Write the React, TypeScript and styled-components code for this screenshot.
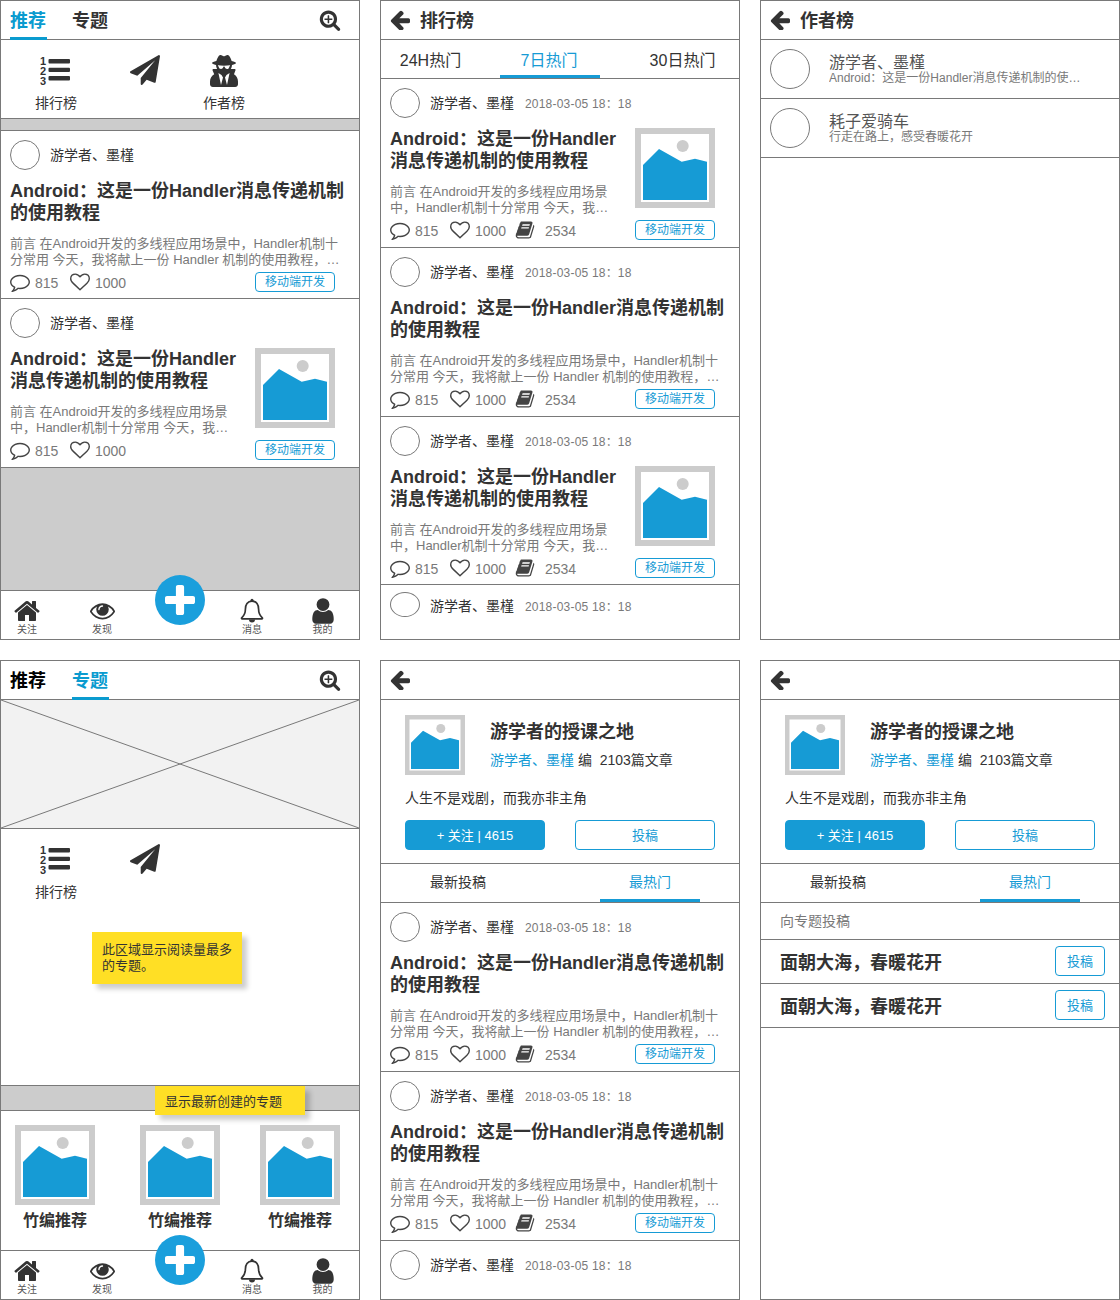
import styled, { createGlobalStyle } from "styled-components";
import { FaUserSecret } from "react-icons/fa";

const BLUE = "#169bd5";
const LINE = "#797979";
const INK = "#333333";

// Font Awesome 4 shapes, the ones the wireframe was drawn with
const ICONS = {
  arrowLeft:
    "M1664 896v128q0 53-32.5 90.5t-84.5 37.5h-704l293 294q38 36 38 90t-38 90l-75 76q-38 38-90 38-53 0-91-38l-651-652q-37-37-37-90 0-52 37-91l651-650q38-38 91-38 52 0 90 38l75 74q38 38 38 91t-38 91l-293 293h704q52 0 84.5 37.5t32.5 90.5z",
  plane:
    "M1764 11q33 24 27 64l-256 1536q-5 29-32 45-14 8-31 8-11 0-24-5l-453-185-242 295q-18 23-49 23-13 0-22-4-19-7-30.5-23.5t-11.5-36.5v-349l864-1059-1069 925-395-162q-37-14-40-55-2-40 32-59l1664-960q15-9 32-9 20 0 36 11z",
  home:
    "M1472 992v480q0 26-19 45t-45 19h-384v-384h-256v384h-384q-26 0-45-19t-19-45v-480q0-1 .5-3t.5-3l575-474 575 474q1 2 1 6zm223-69l-62 74q-8 9-21 11h-3q-13 0-21-7l-692-577-692 577q-12 8-24 7-13-2-21-11l-62-74q-8-10-7-23.5t11-21.5l719-599q32-26 76-26t76 26l244 204v-195q0-14 9-23t23-9h192q14 0 23 9t9 23v408l219 182q10 8 11 21.5t-7 23.5z",
  eye:
    "M1664 960q-152-236-381-353 61 104 61 225 0 185-131.5 316.5t-316.5 131.5-316.5-131.5-131.5-316.5q0-121 61-225-229 117-381 353 133 205 333.5 326.5t434.5 121.5 434.5-121.5 333.5-326.5zm-720-384q0-20-14-34t-34-14q-125 0-214.5 89.5t-89.5 214.5q0 20 14 34t34 14 34-14 14-34q0-86 61-147t147-61q20 0 34-14t14-34zm848 384q0 34-20 69-140 230-376.5 368.5t-499.5 138.5-499.5-139-376.5-368q-20-35-20-69t20-69q140-229 376.5-368t499.5-139 499.5 139 376.5 368q20 35 20 69z",
  user:
    "M1536 1399q0 109-62.5 187t-150.5 78h-854q-88 0-150.5-78t-62.5-187q0-85 8.5-160.5t31.5-152 58.5-131 94-89 134.5-34.5q131 128 313 128t313-128q76 0 134.5 34.5t94 89 58.5 131 31.5 152 8.5 160.5zm-256-887q0 159-112.5 271.5t-271.5 112.5-271.5-112.5-112.5-271.5 112.5-271.5 271.5-112.5 271.5 112.5 112.5 271.5z",
  book:
    "M1703 478q40 57 18 129l-275 906q-19 64-76.5 107.5t-122.5 43.5h-923q-77 0-148.5-53.5t-99.5-131.5q-24-67-2-127 0-4 3-27t4-37q1-8-3-21.5t-3-19.5q2-11 8-21t16.5-23.5 16.5-23.5q23-38 45-91.5t30-91.5q3-10 .5-30t-.5-28q3-11 17-28t17-23q21-36 42-92t25-90q1-9-2.5-32t.5-28q4-13 22-30.5t22-22.5q19-26 42.5-84.5t27.5-96.5q1-8-3-25.5t-2-26.5q2-8 9-18t18-23 17-21q8-12 16.5-30.5t15-35 16-36 19.5-32 26.5-23.5 36-11.5 47.5 5.5l-1 3q38-9 51-9h761q74 0 114 56t18 130l-274 906q-36 119-71.5 153.5t-128.5 34.5h-869q-27 0-38 15-11 16-1 43 24 70 144 70h923q29 0 56-15.5t35-41.5l300-987q7-22 5-57 38 15 59 43zm-1064 2q-4 13 2 22.5t20 9.5h608q13 0 25.5-9.5t16.5-22.5l21-64q4-13-2-22.5t-20-9.5h-608q-13 0-25.5 9.5t-16.5 22.5zm-83 256q-4 13 2 22.5t20 9.5h608q13 0 25.5-9.5t16.5-22.5l21-64q4-13-2-22.5t-20-9.5h-608q-13 0-25.5 9.5t-16.5 22.5z",
  search:
    "M1088 800v64q0 13-9.5 22.5t-22.5 9.5h-224v224q0 13-9.5 22.5t-22.5 9.5h-64q-13 0-22.5-9.5t-9.5-22.5v-224h-224q-13 0-22.5-9.5t-9.5-22.5v-64q0-13 9.5-22.5t22.5-9.5h224v-224q0-13 9.5-22.5t22.5-9.5h64q13 0 22.5 9.5t9.5 22.5v224h224q13 0 22.5 9.5t9.5 22.5zm128 32q0-185-131.5-316.5t-316.5-131.5-316.5 131.5-131.5 316.5 131.5 316.5 316.5 131.5 316.5-131.5 131.5-316.5zm512 832q0 53-37.5 90.5t-90.5 37.5q-54 0-90-38l-343-342q-179 124-399 124-143 0-273.5-55.5t-225-150-150-225-55.5-273.5 55.5-273.5 150-225 225-150 273.5-55.5 273.5 55.5 225 150 150 225 55.5 273.5q0 220-124 399l343 343q37 37 37 90z",
  comment:
    "M896 384q-204 0-381.5 69.5t-282 187.5-104.5 255q0 112 71.5 213.5t201.5 175.5l87 50-27 96q-24 91-70 172 152-63 275-171l43-38 57 6q69 8 130 8 204 0 381.5-69.5t282-187.5 104.5-255-104.5-255-282-187.5-381.5-69.5zm896 512q0 174-120 321.5t-326 233-450 85.5q-70 0-145-8-198 175-460 242-49 14-114 22h-5q-15 0-27-10.5t-16-27.5v-1q-3-4-.5-12t2-10 4.5-9.5l6-9 7-8.5 8-9q7-8 31-34.5t34.5-38 31-39.5 32.5-51 27-59 26-76q-157-89-247.5-220t-90.5-281q0-174 120-321.5t326-233 450-85.5 450 85.5 326 233 120 321.5z",
  heart:
    "M1664 596q0-81-21.5-143t-55-98.5-81.5-59.5-94-31-98-8-112 25.5-110.5 64-86.5 72-60 61.5q-18 22-49 22t-49-22q-24-28-60-61.5t-86.5-72-110.5-64-112-25.5-98 8-94 31-81.5 59.5-55 98.5-21.5 143q0 168 187 355l581 560 580-559q188-188 188-356zm128 0q0 221-229 450l-623 600q-18 18-44 18t-44-18l-624-601q-10-8-27.5-26t-55.5-65.5-68-97.5-53.5-121-23.5-138q0-220 127-344t351-124q62 0 126.5 21.5t120 58 95.5 68.5 76 68q36-36 76-68t95.5-68.5 120-58 126.5-21.5q224 0 351 124t127 344z",
  plus:
    "M1600 736v192q0 40-28 68t-68 28h-416v416q0 40-28 68t-68 28h-192q-40 0-68-28t-28-68v-416h-416q-40 0-68-28t-28-68v-192q0-40 28-68t68-28h416v-416q0-40 28-68t68-28h192q40 0 68 28t28 68v416h416q40 0 68 28t28 68z",
};

const Icon = ({ name, size, viewBox }: { name: keyof typeof ICONS; size: number; viewBox?: string }) => (
  <svg width={size} height={size} viewBox={viewBox ?? "0 0 1792 1792"} fill="currentColor">
    <path d={ICONS[name]} />
  </svg>
);

const RankIcon = () => (
  <svg width="30" height="30" viewBox="0 0 30 30" fill="currentColor">
    <text x="3" y="9.5" textAnchor="middle" fontSize="11" fontWeight="700">1</text>
    <text x="3" y="19.5" textAnchor="middle" fontSize="11" fontWeight="700">2</text>
    <text x="3" y="29.5" textAnchor="middle" fontSize="11" fontWeight="700">3</text>
    <rect x="8.5" y="4" width="21.5" height="4.4" rx="1" />
    <rect x="8.5" y="12.7" width="21.5" height="4.4" rx="1" />
    <rect x="8.5" y="21" width="21.5" height="4.4" rx="1" />
  </svg>
);

const BellIcon = () => (
  <svg width="24" height="26" viewBox="0 0 24 26">
    <path
      d="M12 3.2c-4.6 0-6.6 3.4-6.6 8 0 4.6-1.6 6.6-3.7 8.6-.4.5-.1 1.1.4 1.1h19.8c.5 0 .8-.6.4-1.1-2.1-2-3.7-4-3.7-8.6 0-4.6-2-8-6.6-8z"
      fill="none"
      stroke="currentColor"
      strokeWidth="1.7"
    />
    <circle cx="12" cy="2.2" r="1.5" fill="currentColor" />
    <path d="M9 21.6h6a3 3 0 0 1-6 0z" fill="currentColor" />
  </svg>
);

const GlobalStyle = createGlobalStyle`
  html, body {
    margin: 0;
    padding: 0;
    background: #fff;
  }
  body {
    font-family: "Liberation Sans", "Noto Sans CJK SC", sans-serif;
    color: ${INK};
  }
`;

const Board = styled.div`
  display: grid;
  grid-template-columns: repeat(3, 360px);
  grid-auto-rows: 640px;
  gap: 20px;
  width: 1120px;
`;

const Screen = styled.div`
  position: relative;
  box-sizing: border-box;
  display: flex;
  flex-direction: column;
  border: 1px solid ${LINE};
  overflow: hidden;
`;

const Header = styled.div`
  flex: none;
  box-sizing: border-box;
  height: 39px;
  display: flex;
  align-items: center;
  gap: 10px;
  padding: 0 9px;
  border-bottom: 1px solid ${LINE};
  color: ${INK};
`;

const HeaderTitle = styled.div`
  font-size: 18px;
  font-weight: 700;
  padding-bottom: 2px;
`;

const MainTab = styled.div<{ $active?: boolean; $strong?: boolean }>`
  box-sizing: border-box;
  height: 38px;
  width: 37px;
  margin-right: 15px;
  padding-top: 7px;
  line-height: 24px;
  font-size: 18px;
  font-weight: 700;
  white-space: nowrap;
  color: ${(p) => (p.$active ? "#0a9bcf" : p.$strong ? "#000" : INK)};
  border-bottom: 3px solid ${(p) => (p.$active ? "#0a9bcf" : "transparent")};
  margin-top: 1px;
`;

const SearchButton = styled.div`
  margin-left: auto;
  margin-right: 9px;
  line-height: 0;
  color: ${INK};
`;

const Shortcuts = styled.div`
  flex: none;
  display: grid;
  grid-template-columns: 110px 68px 90px;
  height: 78px;
  box-sizing: border-box;
`;

const Shortcut = styled.div`
  display: flex;
  flex-direction: column;
  align-items: center;
  gap: 9px;
  padding-top: 15px;
  font-size: 14px;
  line-height: 18px;
`;

const ShortcutIcon = styled.div<{ $nudge?: number }>`
  height: 30px;
  font-size: 32px;
  line-height: 0;
  margin-left: ${(p) => p.$nudge ?? 0}px;
  color: ${INK};
`;

const Band = styled.div<{ $height?: number }>`
  flex: none;
  height: ${(p) => p.$height ?? 11}px;
  background: #cccccc;
  border-top: 1px solid ${LINE};
  border-bottom: 1px solid ${LINE};
`;

const Filler = styled.div`
  flex: 1;
  background: #cccccc;
`;

const Spacer = styled.div`
  flex: 1;
`;

const ArticleBox = styled.div<{ $tight?: boolean; $last?: boolean; $top?: number }>`
  flex: none;
  box-sizing: border-box;
  padding: ${(p) => p.$top ?? 9}px 0 ${(p) => (p.$tight ? 6 : 7)}px 9px;
  border-bottom: ${(p) => (p.$last ? "none" : `1px solid ${LINE}`)};
`;

const AuthorRow = styled.div<{ $squat?: boolean }>`
  display: flex;
  align-items: center;
  height: ${(p) => (p.$squat ? 28 : 30)}px;
  font-size: 14px;
`;

const Avatar = styled.div<{ $size?: number; $squat?: boolean }>`
  flex: none;
  box-sizing: border-box;
  width: ${(p) => p.$size ?? 30}px;
  height: ${(p) => (p.$squat ? 25 : p.$size ?? 30)}px;
  align-self: ${(p) => (p.$squat ? "flex-start" : "auto")};
  border: 1px solid ${LINE};
  border-radius: 50%;
  background: #fff;
`;

const AuthorName = styled.div`
  margin-left: 10px;
  padding-bottom: 2px;
`;

const DateText = styled.div`
  margin-left: 11px;
  padding-bottom: 2px;
  font-size: 12px;
  color: #797979;
  letter-spacing: 0.2px;
`;

const ArticleBody = styled.div<{ $thumb?: boolean }>`
  display: grid;
  grid-template-columns: ${(p) => (p.$thumb ? "232px 80px" : "340px")};
  column-gap: 13px;
  margin-top: 10px;
  height: 87px;
`;

const ArticleTitle = styled.div`
  font-size: 18px;
  line-height: 22px;
  font-weight: 700;
  color: ${INK};
`;

const ArticleDesc = styled.div<{ $thumb?: boolean }>`
  margin-top: 12px;
  font-size: 13px;
  line-height: 16px;
  color: #797979;
  max-width: ${(p) => (p.$thumb ? 225 : 330)}px;
  display: -webkit-box;
  -webkit-line-clamp: 2;
  -webkit-box-orient: vertical;
  overflow: hidden;
`;

const ThumbCell = styled.div`
  line-height: 0;
`;

const StatsRow = styled.div`
  display: flex;
  align-items: center;
  height: 20px;
  margin-top: 5px;
  padding-right: 24px;
  font-size: 14px;
  color: #797979;
`;

const Stat = styled.div<{ $width: number }>`
  display: flex;
  align-items: center;
  gap: 5px;
  width: ${(p) => p.$width}px;
  margin-top: 2px;
`;

const StatIcon = styled.span`
  display: inline-flex;
  margin-top: -2px;
  color: #444444;
`;

const StatNumber = styled.span<{ $gap?: number }>`
  margin-left: ${(p) => p.$gap ?? 0}px;
`;

const Tag = styled.div`
  box-sizing: border-box;
  margin-left: auto;
  width: 80px;
  height: 20px;
  border: 1px solid ${BLUE};
  border-radius: 4px;
  text-align: center;
  line-height: 18px;
  font-size: 12px;
  color: ${BLUE};
`;

const SubTabs = styled.div`
  flex: none;
  box-sizing: border-box;
  height: 39px;
  display: grid;
  grid-template-columns: 119px 100px 1fr;
  border-bottom: 1px solid ${LINE};
`;

const SubTab = styled.div<{ $active?: boolean; $left?: number; $right?: number }>`
  box-sizing: border-box;
  height: 38px;
  text-align: center;
  line-height: 42px;
  font-size: 16px;
  color: ${(p) => (p.$active ? BLUE : INK)};
  border-bottom: 3px solid ${(p) => (p.$active ? BLUE : "transparent")};
  padding-left: ${(p) => p.$left ?? 0}px;
  padding-right: ${(p) => p.$right ?? 0}px;
`;

const TopicTabs = styled(SubTabs)`
  grid-template-columns: 219px 100px;
`;

const TopicTab = styled(SubTab)`
  font-size: 14px;
  line-height: 36px;
`;

const AuthorItem = styled.div`
  flex: none;
  box-sizing: border-box;
  height: 59px;
  display: flex;
  align-items: center;
  gap: 19px;
  padding: 0 9px;
  border-bottom: 1px solid ${LINE};
`;

const AuthorText = styled.div`
  min-width: 0;
`;

const AuthorItemName = styled.div`
  font-size: 16px;
  line-height: 20px;
  color: #555;
`;

const AuthorItemSub = styled.div`
  margin-top: -2px;
  font-size: 12px;
  line-height: 14px;
  color: #797979;
  width: 252px;
  white-space: nowrap;
  overflow: hidden;
  text-overflow: ellipsis;
`;

const TabBar = styled.div`
  flex: none;
  box-sizing: border-box;
  height: 49px;
  display: grid;
  grid-template-columns: 52px 98px 67px 68px 1fr;
  border-top: 1px solid ${LINE};
  background: #fff;
`;

const TabItem = styled.div`
  display: flex;
  flex-direction: column;
  align-items: center;
  padding-top: 6px;
  font-size: 10px;
  line-height: 12px;
  color: #555;
`;

const TabIcon = styled.div`
  height: 27px;
  display: flex;
  align-items: center;
  justify-content: center;
  color: ${INK};
`;

const Fab = styled.div<{ $bottom: number }>`
  position: absolute;
  left: 154px;
  bottom: ${(p) => p.$bottom}px;
  width: 50px;
  height: 50px;
  border-radius: 50%;
  background: #1a9fdc;
  display: flex;
  align-items: center;
  justify-content: center;
  color: #fff;
`;

const Note = styled.div<{ $left: number; $top: number; $width: number; $height: number; $pad: number }>`
  position: absolute;
  left: ${(p) => p.$left}px;
  top: ${(p) => p.$top}px;
  width: ${(p) => p.$width}px;
  height: ${(p) => p.$height}px;
  box-sizing: border-box;
  padding: ${(p) => p.$pad}px 10px 0;
  background: #ffdf25;
  box-shadow: 5px 5px 5px rgba(0, 0, 0, 0.2);
  font-size: 13px;
  line-height: 16px;
  color: ${INK};
`;

const Banner = styled.div`
  flex: none;
  height: 128px;
  line-height: 0;
  background: #f2f2f2;
  border-bottom: 1px solid ${LINE};
`;

const TopicGrid = styled.div`
  flex: none;
  height: 139px;
  box-sizing: border-box;
  display: grid;
  grid-template-columns: 125px 120px 1fr;
  padding: 14px 0 0 14px;
`;

const TopicCard = styled.div`
  width: 80px;
  line-height: 0;
`;

const TopicName = styled.div`
  margin-top: 6px;
  font-size: 16px;
  line-height: 20px;
  font-weight: 700;
  text-align: center;
  color: ${INK};
`;

const Profile = styled.div`
  flex: none;
  box-sizing: border-box;
  height: 164px;
  padding: 15px 24px 0;
  border-bottom: 1px solid ${LINE};
`;

const ProfileHead = styled.div`
  display: flex;
  gap: 25px;
  line-height: 0;
`;

const ProfileName = styled.div`
  font-size: 18px;
  line-height: 24px;
  font-weight: 700;
  color: ${INK};
  margin-top: 5px;
`;

const ProfileMeta = styled.div`
  margin-top: 8px;
  font-size: 14px;
  line-height: 16px;
  color: ${INK};
`;

const BlueText = styled.span`
  color: ${BLUE};
`;

const Motto = styled.div`
  margin-top: 15px;
  font-size: 14px;
  line-height: 16px;
  color: ${INK};
`;

const ProfileButtons = styled.div`
  display: flex;
  gap: 30px;
  margin-top: 14px;
`;

const ActionButton = styled.div<{ $filled?: boolean; $width?: number }>`
  box-sizing: border-box;
  width: ${(p) => p.$width ?? 140}px;
  height: 30px;
  border: 1px solid ${BLUE};
  border-radius: 4px;
  text-align: center;
  line-height: 30px;
  font-size: 13px;
  font-weight: 400;
  background: ${(p) => (p.$filled ? BLUE : "#fff")};
  color: ${(p) => (p.$filled ? "#fff" : BLUE)};
`;

const SubmitCaption = styled.div`
  flex: none;
  box-sizing: border-box;
  height: 37px;
  padding-left: 19px;
  line-height: 36px;
  font-size: 14px;
  color: #797979;
  border-bottom: 1px solid ${LINE};
`;

const SubmitRow = styled.div`
  flex: none;
  box-sizing: border-box;
  height: 44px;
  display: flex;
  align-items: center;
  justify-content: space-between;
  padding: 0 14px 2px 19px;
  font-size: 18px;
  font-weight: 700;
  color: ${INK};
  border-bottom: 1px solid ${LINE};
`;

const Thumb = ({ size = 80 }: { size?: number }) => (
  <svg width={size} height={size} viewBox="0 0 80 80">
    <rect width="80" height="80" fill="#cccccc" />
    <rect x="6" y="6" width="68" height="68" fill="#fff" />
    <circle cx="47.7" cy="18" r="6" fill="#cccccc" />
    <path d="M8 37 L24 21 L46.7 33.7 L60 30.7 L72 33.7 L72 72 L8 72 Z" fill="#169bd5" />
  </svg>
);

const BannerCross = () => (
  <svg width="358" height="128" viewBox="0 0 358 128">
    <path d="M0 0 L358 128 M358 0 L0 128" stroke="#797979" strokeWidth="1" fill="none" />
  </svg>
);

const DESC_LONG =
  "前言 在Android开发的多线程应用场景中，Handler机制十分常用 今天，我将献上一份 Handler 机制的使用教程，希望对大家有所帮助，欢迎阅读";

type ArticleProps = {
  thumb?: boolean;
  meta?: boolean;
  tight?: boolean;
};

const Author = ({ meta, squat }: { meta?: boolean; squat?: boolean }) => (
  <AuthorRow $squat={squat}>
    <Avatar $squat={squat} />
    <AuthorName>游学者、墨槿</AuthorName>
    {meta && <DateText>2018-03-05 18：18</DateText>}
  </AuthorRow>
);

const Article = ({ thumb, meta, tight }: ArticleProps) => (
  <ArticleBox $tight={tight}>
    <Author meta={meta} />
    <ArticleBody $thumb={thumb}>
      <div>
        <ArticleTitle>Android：这是一份Handler消息传递机制的使用教程</ArticleTitle>
        <ArticleDesc $thumb={thumb}>{DESC_LONG}</ArticleDesc>
      </div>
      {thumb && (
        <ThumbCell>
          <Thumb />
        </ThumbCell>
      )}
    </ArticleBody>
    <StatsRow>
      <Stat $width={60}>
        <StatIcon>
          <Icon name="comment" size={20} />
        </StatIcon>
        815
      </Stat>
      <Stat $width={65}>
        <StatIcon>
          <Icon name="heart" size={20} />
        </StatIcon>
        1000
      </Stat>
      {meta && (
        <Stat $width={80}>
          <StatIcon>
            <Icon name="book" size={20} />
          </StatIcon>
          <StatNumber $gap={5}>2534</StatNumber>
        </Stat>
      )}
      <Tag>移动端开发</Tag>
    </StatsRow>
  </ArticleBox>
);

const BottomBar = () => (
  <>
    <TabBar>
      <TabItem>
        <TabIcon>
          <Icon name="home" size={28} />
        </TabIcon>
        关注
      </TabItem>
      <TabItem>
        <TabIcon>
          <Icon name="eye" size={25} />
        </TabIcon>
        发现
      </TabItem>
      <div />
      <TabItem>
        <TabIcon>
          <BellIcon />
        </TabIcon>
        消息
      </TabItem>
      <TabItem>
        <TabIcon>
          <Icon name="user" size={30} />
        </TabIcon>
        我的
      </TabItem>
    </TabBar>
    <Fab $bottom={14}>
      <Icon name="plus" size={30} viewBox="192 128 1408 1408" />
    </Fab>
  </>
);

const BackHeader = ({ title }: { title?: string }) => (
  <Header>
    <Icon name="arrowLeft" size={20} viewBox="128 128 1536 1536" />
    {title && <HeaderTitle>{title}</HeaderTitle>}
  </Header>
);

const HomeHeader = ({ active }: { active: "rec" | "topic" }) => (
  <Header>
    <MainTab $active={active === "rec"} $strong>
      推荐
    </MainTab>
    <MainTab $active={active === "topic"}>专题</MainTab>
    <SearchButton>
      <Icon name="search" size={22} />
    </SearchButton>
  </Header>
);

const ProfileBlock = () => (
  <Profile>
    <ProfileHead>
      <Thumb size={60} />
      <div>
        <ProfileName>游学者的授课之地</ProfileName>
        <ProfileMeta>
          <BlueText>游学者、墨槿</BlueText> 编&nbsp;&nbsp;2103篇文章
        </ProfileMeta>
      </div>
    </ProfileHead>
    <Motto>人生不是戏剧，而我亦非主角</Motto>
    <ProfileButtons>
      <ActionButton $filled>+ 关注 | 4615</ActionButton>
      <ActionButton>投稿</ActionButton>
    </ProfileButtons>
  </Profile>
);

const TopicTabRow = () => (
  <TopicTabs>
    <TopicTab $right={65}>最新投稿</TopicTab>
    <TopicTab $active>最热门</TopicTab>
  </TopicTabs>
);

export default function App() {
  return (
    <>
      <GlobalStyle />
      <Board>
        <Screen>
          <HomeHeader active="rec" />
          <Shortcuts>
            <Shortcut>
              <ShortcutIcon $nudge={-2}>
                <RankIcon />
              </ShortcutIcon>
              排行榜
            </Shortcut>
            <Shortcut>
              <ShortcutIcon>
                <Icon name="plane" size={30} />
              </ShortcutIcon>
            </Shortcut>
            <Shortcut>
              <ShortcutIcon>
                <FaUserSecret />
              </ShortcutIcon>
              作者榜
            </Shortcut>
          </Shortcuts>
          <Band />
          <Article tight />
          <Article thumb />
          <Filler />
          <BottomBar />
        </Screen>

        <Screen>
          <BackHeader title="排行榜" />
          <SubTabs>
            <SubTab $right={20}>24H热门</SubTab>
            <SubTab $active $right={2}>
              7日热门
            </SubTab>
            <SubTab $left={26}>30日热门</SubTab>
          </SubTabs>
          <Article thumb meta />
          <Article meta />
          <Article thumb meta tight />
          <ArticleBox $last $top={7}>
            <Author meta squat />
          </ArticleBox>
        </Screen>

        <Screen>
          <BackHeader title="作者榜" />
          <AuthorItem>
            <Avatar $size={40} />
            <AuthorText>
              <AuthorItemName>游学者、墨槿</AuthorItemName>
              <AuthorItemSub>Android：这是一份Handler消息传递机制的使用教程，希望对大家有所帮助</AuthorItemSub>
            </AuthorText>
          </AuthorItem>
          <AuthorItem>
            <Avatar $size={40} />
            <AuthorText>
              <AuthorItemName>耗子爱骑车</AuthorItemName>
              <AuthorItemSub>行走在路上，感受春暖花开</AuthorItemSub>
            </AuthorText>
          </AuthorItem>
        </Screen>

        <Screen>
          <HomeHeader active="topic" />
          <Banner>
            <BannerCross />
          </Banner>
          <Shortcuts>
            <Shortcut>
              <ShortcutIcon $nudge={-2}>
                <RankIcon />
              </ShortcutIcon>
              排行榜
            </Shortcut>
            <Shortcut>
              <ShortcutIcon>
                <Icon name="plane" size={30} />
              </ShortcutIcon>
            </Shortcut>
          </Shortcuts>
          <Spacer />
          <Band $height={24} />
          <TopicGrid>
            <TopicCard>
              <Thumb />
              <TopicName>竹编推荐</TopicName>
            </TopicCard>
            <TopicCard>
              <Thumb />
              <TopicName>竹编推荐</TopicName>
            </TopicCard>
            <TopicCard>
              <Thumb />
              <TopicName>竹编推荐</TopicName>
            </TopicCard>
          </TopicGrid>
          <BottomBar />
          <Note $left={91} $top={271} $width={150} $height={52} $pad={10}>
            此区域显示阅读量最多的专题。
          </Note>
          <Note $left={154} $top={425} $width={150} $height={29} $pad={8}>
            显示最新创建的专题
          </Note>
        </Screen>

        <Screen>
          <BackHeader />
          <ProfileBlock />
          <TopicTabRow />
          <Article meta />
          <Article meta />
          <ArticleBox $last>
            <Author meta />
          </ArticleBox>
        </Screen>

        <Screen>
          <BackHeader />
          <ProfileBlock />
          <TopicTabRow />
          <SubmitCaption>向专题投稿</SubmitCaption>
          <SubmitRow>
            面朝大海，春暖花开
            <ActionButton $width={50}>投稿</ActionButton>
          </SubmitRow>
          <SubmitRow>
            面朝大海，春暖花开
            <ActionButton $width={50}>投稿</ActionButton>
          </SubmitRow>
        </Screen>
      </Board>
    </>
  );
}
